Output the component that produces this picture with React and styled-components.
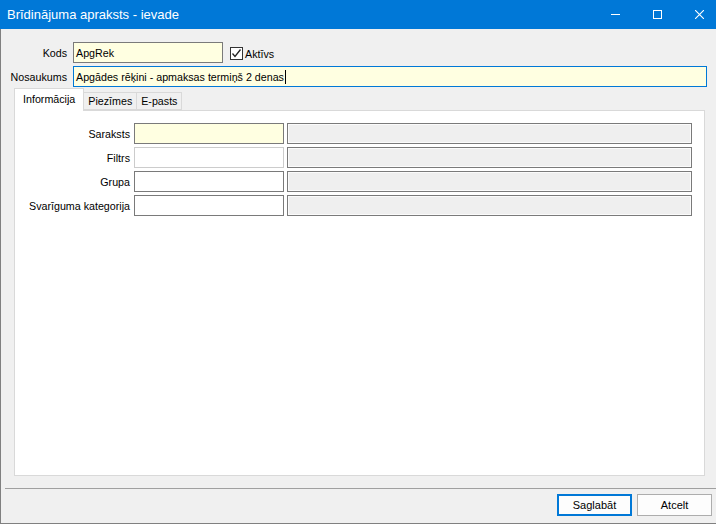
import React from 'react';
import styled, { createGlobalStyle } from 'styled-components';

const GlobalStyle = createGlobalStyle`
    html, body {
        margin: 0;
        padding: 0;
        background: #f0f0f0;
    }
    body {
        font-family: "Liberation Sans", Arial, sans-serif;
        font-size: 10.7px;
        color: #000;
    }
    * {
        box-sizing: border-box;
    }
`;

const Window = styled.div`
    width: 716px;
    height: 524px;
    display: flex;
    flex-direction: column;
    background: #f0f0f0;
    overflow: hidden;
`;

const TitleBar = styled.div`
    height: 29px;
    flex: none;
    background: #0078d7;
    color: #fff;
    display: flex;
    align-items: center;
    justify-content: space-between;
    padding-left: 7px;
    font-size: 13px;
    padding-bottom: 1px;
`;

const Captions = styled.div`
    display: flex;
    align-items: center;
    gap: 33px;
    padding-right: 12px;
    padding-top: 1px;
`;

const Body = styled.div`
    flex: 1;
    display: flex;
    flex-direction: column;
    border-left: 1px solid #808080;
    border-bottom: 1px solid #808080;
    padding-top: 13px;
`;

const HeaderGrid = styled.div`
    display: grid;
    grid-template-columns: 66px 1fr;
    column-gap: 6px;
    row-gap: 3px;
    padding-right: 9px;
`;

const Label = styled.div`
    text-align: right;
    align-self: center;
    white-space: nowrap;
`;

const Row = styled.div`
    display: flex;
    align-items: center;
`;

const Field = styled.div`
    height: 21px;
    width: ${p => (p.$w ? `${p.$w}px` : 'auto')};
    flex: ${p => (p.$w ? 'none' : '1')};
    display: flex;
    align-items: center;
    padding: 0 2px;
    white-space: nowrap;
    background: ${p => (p.$yellow ? '#ffffe1' : p.$disabled ? '#efefef' : '#fff')};
    border: 1px solid ${p => (p.$focus ? '#0078d7' : p.$light ? '#cccccc' : '#7a7a7a')};
    box-shadow: ${p => (p.$disabled ? 'inset 0 0 0 1px #fbfbfb' : 'none')};
`;

const Caret = styled.span`
    display: inline-block;
    width: 1px;
    height: 14px;
    background: #000;
    margin-left: 1px;
`;

const CheckLabel = styled.label`
    display: flex;
    align-items: center;
    gap: 2px;
    margin-left: 7px;
    margin-top: 2px;
`;

const CheckBox = styled.span`
    width: 13px;
    height: 13px;
    border: 1px solid #333;
    background: #fff;
    display: flex;
    align-items: center;
    justify-content: center;
`;

const TabStrip = styled.div`
    display: flex;
    align-items: flex-end;
    margin: 1px 0 0 13px;
    height: 22px;
    position: relative;
    z-index: 1;
`;

const Tab = styled.div`
    height: ${p => (p.$active ? 23 : 18)}px;
    padding: 0 ${p => (p.$active ? 8 : 4)}px;
    margin-bottom: ${p => (p.$active ? -1 : 0)}px;
    background: ${p => (p.$active ? '#fff' : '#f0f0f0')};
    border: 1px solid #d9d9d9;
    border-bottom: ${p => (p.$active ? 'none' : '1px solid #d9d9d9')};
    border-left: ${p => (p.$first ? '1px solid #d9d9d9' : 'none')};
    display: flex;
    align-items: ${p => (p.$active ? 'flex-start' : 'center')};
    padding-top: ${p => (p.$active ? 4 : 0)}px;
`;

const Panel = styled.div`
    margin: 0 11px 0 13px;
    height: 366px;
    background: #fff;
    border: 1px solid #d9d9d9;
    padding: 12px 12px 0 0;
`;

const PanelGrid = styled.div`
    display: grid;
    grid-template-columns: 116px 150px 1fr;
    column-gap: 3px;
    row-gap: 3px;
    & > ${Label} {
        padding-right: 1px;
    }
`;

const Footer = styled.div`
    margin-top: 12px;
    margin-left: 4px;
    border-top: 1px solid #a0a0a0;
    display: flex;
    justify-content: flex-end;
    gap: 5px;
    padding: 5px 4px 0 0;
`;

const Button = styled.button`
    width: 75px;
    height: 22px;
    font-family: inherit;
    font-size: 11px;
    color: #000;
    background: #fdfdfd;
    border: 1px solid ${p => (p.$default ? '#0078d7' : '#adadad')};
    box-shadow: ${p => (p.$default ? 'inset 0 0 0 1px #0078d7' : 'none')};
    padding: 0;
    cursor: pointer;
`;

const Minimize = () => (
    <svg width="9" height="9" viewBox="0 0 9 9">
        <path d="M0 4.5H9" stroke="#fff" strokeWidth="1" />
    </svg>
);

const Maximize = () => (
    <svg width="9" height="9" viewBox="0 0 9 9">
        <rect x="0.5" y="0.5" width="8" height="8" fill="none" stroke="#fff" strokeWidth="1" />
    </svg>
);

const Close = () => (
    <svg width="9" height="9" viewBox="0 0 9 9">
        <path d="M0 0L9 9M9 0L0 9" stroke="#fff" strokeWidth="1.1" />
    </svg>
);

const rows = [
    { label: 'Saraksts', yellow: true },
    { label: 'Filtrs', light: true },
    { label: 'Grupa' },
    { label: 'Svarīguma kategorija' },
];

function App() {
    return (
        <Window>
            <GlobalStyle />
            <TitleBar>
                <span>Brīdinājuma apraksts - ievade</span>
                <Captions>
                    <Minimize />
                    <Maximize />
                    <Close />
                </Captions>
            </TitleBar>
            <Body>
                <HeaderGrid>
                    <Label>Kods</Label>
                    <Row>
                        <Field $w={150} $yellow>ApgRek</Field>
                        <CheckLabel>
                            <CheckBox>
                                <svg width="11" height="11" viewBox="0 0 11 11">
                                    <path d="M1.5 5.5L4 8.5L9.5 1.5" fill="none" stroke="#222" strokeWidth="1.3" />
                                </svg>
                            </CheckBox>
                            Aktīvs
                        </CheckLabel>
                    </Row>
                    <Label>Nosaukums</Label>
                    <Field $yellow $focus>
                        Apgādes rēķini - apmaksas termiņš 2 denas<Caret />
                    </Field>
                </HeaderGrid>
                <TabStrip>
                    <Tab $active $first>Informācija</Tab>
                    <Tab>Piezīmes</Tab>
                    <Tab>E-pasts</Tab>
                </TabStrip>
                <Panel>
                    <PanelGrid>
                        {rows.map(r => (
                            <React.Fragment key={r.label}>
                                <Label>{r.label}</Label>
                                <Field $yellow={r.yellow} $light={r.light} />
                                <Field $disabled />
                            </React.Fragment>
                        ))}
                    </PanelGrid>
                </Panel>
                <Footer>
                    <Button $default>Saglabāt</Button>
                    <Button>Atcelt</Button>
                </Footer>
            </Body>
        </Window>
    );
}

export default App;
